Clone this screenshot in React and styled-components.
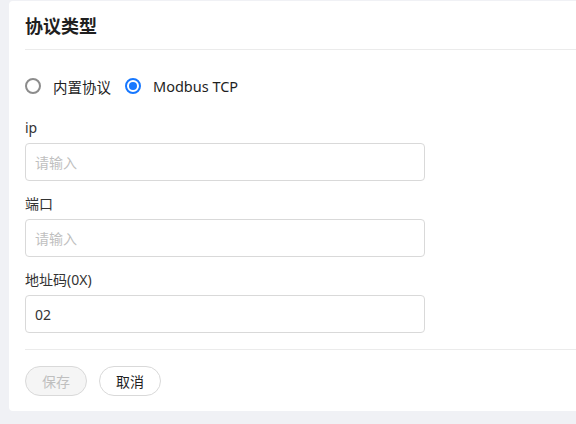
import React, { useState } from 'react'
import styled, { createGlobalStyle } from 'styled-components'

const GlobalStyle = createGlobalStyle`
   html, body {
      margin: 0;
      padding: 0;
      background: #f0f1f5;
      font-family: "Noto Sans", "Noto Sans CJK SC", sans-serif;
      overflow: hidden;
   }
`

const Page = styled.div`
   display: flex;
   padding: 1px 0 0 9px;
   height: 424px;
   box-sizing: border-box;
`

const Card = styled.div`
   flex: 1;
   height: 410px;
   background: #fff;
   border-radius: 4px 0 0 4px;
   padding-left: 16px;
   box-sizing: border-box;
   display: flex;
   flex-direction: column;
`

const Header = styled.div`
   height: 48px;
   display: flex;
   align-items: center;
   border-bottom: 1px solid #ebebeb;
   font-size: 18px;
   font-weight: 700;
   color: #1f1f1f;
`

const RadioRow = styled.div`
   display: flex;
   align-items: center;
   height: 32px;
   margin: 20px 0 15px;
   gap: 14px;
`

const RadioItem = styled.label`
   display: flex;
   align-items: center;
   gap: 12px;
   font-size: 14.5px;
   color: #1f1f1f;
   cursor: pointer;
`

const Circle = styled.span`
   width: 16px;
   height: 16px;
   border-radius: 50%;
   box-sizing: border-box;
   border: 2px solid ${({ checked }) => checked ? '#1677ff' : '#8c8c8c'};
   display: flex;
   align-items: center;
   justify-content: center;

   &::after {
      content: '';
      display: ${({ checked }) => checked ? 'block' : 'none'};
      width: 8px;
      height: 8px;
      border-radius: 50%;
      background: #1677ff;
   }
`

const Field = styled.div`
   display: flex;
   flex-direction: column;
   gap: 4px;
   margin-bottom: 12px;
`

const Label = styled.div`
   font-size: 14px;
   line-height: 22px;
   color: #333;
`

const Input = styled.input`
   width: 400px;
   height: 38px;
   box-sizing: border-box;
   border: 1px solid #d9d9d9;
   border-radius: 4px;
   padding: 0 9px;
   font-size: 14px;
   font-family: inherit;
   color: #333;
   outline: none;

   &::placeholder {
      color: #bfbfbf;
   }
`

const Divider = styled.div`
   border-top: 1px solid #ebebeb;
   margin-top: 4px;
`

const Actions = styled.div`
   display: flex;
   gap: 12px;
   margin-top: 16px;
`

const Button = styled.button`
   width: 62px;
   height: 30px;
   border-radius: 15px;
   border: 1px solid #d9d9d9;
   font-size: 14px;
   font-family: inherit;
   background: ${({ disabled }) => disabled ? '#f5f5f5' : '#fff'};
   color: ${({ disabled }) => disabled ? '#bfbfbf' : '#1f1f1f'};
   padding: 0;
`

const App = () => {
   const [protocol, setProtocol] = useState('modbus')

   return (
      <>
         <GlobalStyle />
         <Page>
            <Card>
               <Header>协议类型</Header>
               <RadioRow>
                  <RadioItem onClick={() => setProtocol('builtin')}>
                     <Circle checked={protocol === 'builtin'} />
                     内置协议
                  </RadioItem>
                  <RadioItem onClick={() => setProtocol('modbus')}>
                     <Circle checked={protocol === 'modbus'} />
                     Modbus TCP
                  </RadioItem>
               </RadioRow>
               <Field>
                  <Label>ip</Label>
                  <Input placeholder="请输入" />
               </Field>
               <Field>
                  <Label>端口</Label>
                  <Input placeholder="请输入" />
               </Field>
               <Field>
                  <Label>地址码(0X)</Label>
                  <Input placeholder="请输入" defaultValue="02" />
               </Field>
               <Divider />
               <Actions>
                  <Button disabled>保存</Button>
                  <Button>取消</Button>
               </Actions>
            </Card>
         </Page>
      </>
   )
}

export default App
